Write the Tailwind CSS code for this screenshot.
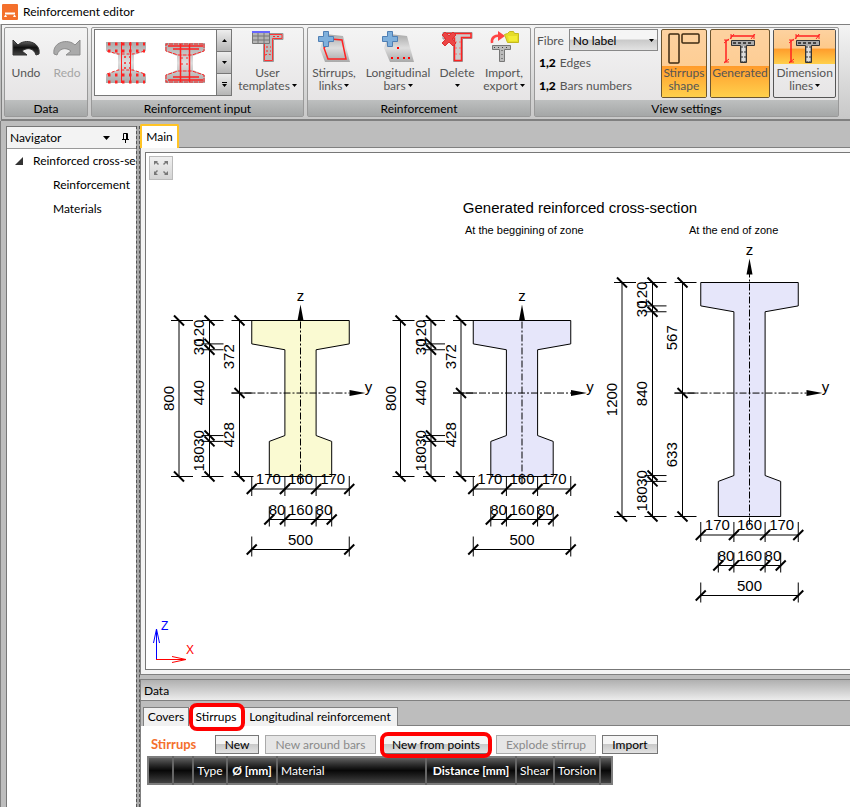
<!DOCTYPE html>
<html lang="en">
<head>
    <meta charset="UTF-8">
    <meta name="viewport" content="width=device-width, initial-scale=1.0">
    <title>Reinforcement editor</title>
    <script src="https://cdn.jsdelivr.net/npm/@tailwindcss/browser@4"></script>
</head>
<body class="h-screen flex flex-col overflow-hidden bg-[#bdbdbd] font-['Lato','Open_Sans',sans-serif] text-xs text-black">
    <!-- Icons shared by the ribbon -->
    <svg class="absolute w-0 h-0">
        <defs>
            <linearGradient id="steel" x1="0" y1="0" x2="0" y2="1">
                <stop offset="0" stop-color="#a9a9a9"/><stop offset=".5" stop-color="#dedede"/><stop offset="1" stop-color="#a9a9a9"/>
            </linearGradient>
            <linearGradient id="ink" x1="0" y1="0" x2="0" y2="1">
                <stop offset="0" stop-color="#777"/><stop offset=".5" stop-color="#111"/><stop offset="1" stop-color="#444"/>
            </linearGradient>
            <symbol id="plus" viewBox="0 0 16 16">
                <path d="M5.500 .500h5v5h5v5h-5v5h-5v-5h-5v-5h5z" fill="#7fb0dc" stroke="#4f7fb4"/>
            </symbol>
            <symbol id="beam-dim" viewBox="0 0 32 32">
                <path d="M7.500 8.500h23v5h-8v17h-6v-17h-9z" fill="#aaa" stroke="#333"/>
                <path d="M19.500 14v15" stroke="#ddd" stroke-width="3"/>
                <path d="M9 11h20" stroke="#444" stroke-width="2" stroke-dasharray="3 2"/>
                <path d="M18 14v16M21 14v16" stroke="#333" stroke-dasharray="2 3"/>
                <path d="M7 4h23M2 8v22" stroke="#f22" stroke-width="1.500"/>
                <path d="M6 7l4-5M27 7l4-5M0 11l5-4M0 31l5-4M7 2v5M30 2v5M0 8h5M0 30h5" stroke="#f22"/>
            </symbol>
        </defs>
    </svg>

    <!-- Title bar -->
    <header class="h-6 shrink-0 bg-white flex items-center gap-[5px] px-[2px]">
        <svg class="w-4 h-4" viewBox="0 0 16 16">
            <rect width="16" height="16" rx="1" fill="#f4702c"/>
            <path d="M3 9.500h10" stroke="#fff" stroke-width="2"/>
            <path d="M2 13l1-2h1l1 2zM14 13l-1-2h-1l-1 2z" fill="#fff"/>
        </svg>
        <h1>Reinforcement editor</h1>
    </header>

    <!-- Ribbon -->
    <div class="h-[97px] shrink-0 flex gap-[3px] pt-[2px] pb-[2px] pl-[2px] ml-[1px] border-l border-t border-b-2 border-[#808080] bg-linear-to-b from-[#f4f4f4] to-[#c8c8c8] leading-[13px] text-[#555]">
        <section class="w-[84px] shrink-0 flex flex-col border border-[#999] rounded-xs bg-linear-to-b from-[#f4f4f4] to-[#e3e1e2]">
            <div class="flex-1 flex">
                <button class="w-[42px] flex flex-col items-center pt-[3px]">
                    <svg class="w-8 h-8" viewBox="0 0 32 32">
                        <path d="M3 9v15h14l-5-4c5-4 12-3 14 4l3-1c2-12-14-16-21-9z" fill="url(#ink)" stroke="#333"/>
                    </svg>
                    <span class="pt-[3px]">Undo</span>
                </button>
                <button class="w-10 flex flex-col items-center pt-[3px] text-[#a5a5a5]" disabled>
                    <svg class="w-8 h-8" viewBox="0 0 32 32">
                        <path d="M29 9v15h-14l5-4c-5-4-12-3-14 4l-3-1c-2-12 14-16 21-9z" fill="#aaa" stroke="#8d8d8d"/>
                    </svg>
                    <span class="pt-[3px]">Redo</span>
                </button>
            </div>
            <h2 class="h-4 shrink-0 text-center leading-[17px] text-black bg-linear-to-b from-[#bdbfbf] to-[#a5a7a7]">Data</h2>
        </section>

        <section class="w-[213px] shrink-0 flex flex-col border border-[#999] rounded-xs bg-linear-to-b from-[#f4f4f4] to-[#e3e1e2]">
            <div class="flex-1 flex pl-[2px] pt-[1px]">
                <div class="w-[138px] h-[67px] flex border border-[#777] bg-white">
                    <div class="flex-1 flex items-center justify-center gap-[19px]">
                        <svg class="w-10 h-11" viewBox="0 0 40 44">
                            <path d="M0 1h40v9l-12 4v15l12 4v9H0v-9l12-4V14L0 10z" fill="url(#steel)"/>
                            <path d="M1 10l11 3h15l12-3M1 33l11-4h15l12 4" fill="none" stroke="#f22" stroke-dasharray="3 2"/>
                            <path d="M15.500 1v41M24.500 1v41" stroke="#f22"/>
                            <path d="M2 3h37M2 10h37M2 34h37M2 41h37" stroke="#f22" stroke-width="3" stroke-dasharray="2.500 4.500"/>
                            <path d="M18 16h6M18 22h6M18 27h6" stroke="#f22" stroke-width="1.500" stroke-dasharray="2 3"/>
                        </svg>
                        <svg class="w-10 h-11" viewBox="0 0 40 44">
                            <path d="M0 2h40v8l-12 5v14l12 5v8H0v-8l12-5V15L0 10z" fill="url(#steel)"/>
                            <path d="M1 10V3h38v7l-12 4h-14zM1 34v7h38v-7l-12-4h-14z" fill="none" stroke="#f22" stroke-dasharray="4 1"/>
                            <path d="M3 5h35M8 8h26M8 36h26M3 39h35" stroke="#f22" stroke-width="1.500"/>
                            <path d="M15.500 3v38M24.500 3v38" stroke="#f22" stroke-width="1.500"/>
                            <path d="M17 16v12M22 16v12" stroke="#f22" stroke-dasharray="2 4"/>
                        </svg>
                    </div>
                    <div class="w-[15px] flex flex-col border-l border-[#777] divide-y divide-[#777]">
                        <button class="flex-1 flex items-center justify-center bg-linear-to-b from-[#eee] to-[#b5b5b5]" aria-label="Previous">
                            <svg class="w-[5px] h-[3px]" viewBox="0 0 5 3"><path d="M0 3l2.500-3L5 3z"/></svg>
                        </button>
                        <button class="flex-1 flex items-center justify-center bg-linear-to-b from-[#eee] to-[#b5b5b5]" aria-label="Next">
                            <svg class="w-[5px] h-[3px]" viewBox="0 0 5 3"><path d="M0 0h5L2.500 3z"/></svg>
                        </button>
                        <button class="flex-1 flex items-center justify-center bg-linear-to-b from-[#eee] to-[#b5b5b5]" aria-label="More">
                            <svg class="w-[5px] h-[5px]" viewBox="0 0 5 5"><path d="M0 0h5v1H0zM0 2h5L2.500 5z"/></svg>
                        </button>
                    </div>
                </div>
                <button class="flex-1 flex flex-col items-center pt-[2px]">
                    <svg class="w-8 h-8" viewBox="0 0 32 32">
                        <path d="M0 2.500h31v6H21.500v22h-10V8H0z" fill="#bbb" stroke="#999"/>
                        <path d="M18 3.500h12v4H20.500v22h-8V13" fill="none" stroke="#f33"/>
                        <path d="M13 24l3-1 4 1M14 20h5M14 16h5M21 5.500h7" stroke="#f22" stroke-dasharray="2 2" fill="none"/>
                        <path d="M.500 1.500h17v11H.500zM.500 5h17M.500 9h17M6 1v11M12 1v11" fill="#b5b5b5" stroke="#777"/>
                        <path d="M0 1h18" stroke="#66f" stroke-width="2"/>
                    </svg>
                    <span class="pt-[3px]">User</span>
                    <span class="flex items-center gap-[2px]">templates <svg class="w-[5px] h-[3px]" viewBox="0 0 5 3"><path d="M0 0h5L2.500 3z" fill="#000"/></svg></span>
                </button>
            </div>
            <h2 class="h-4 shrink-0 text-center leading-[17px] text-black bg-linear-to-b from-[#bdbfbf] to-[#a5a7a7]">Reinforcement input</h2>
        </section>

        <section class="w-[224px] shrink-0 flex flex-col border border-[#999] rounded-xs bg-linear-to-b from-[#f4f4f4] to-[#e3e1e2]">
            <div class="flex-1 flex pt-[3px]">
                <button class="w-[52px] flex flex-col items-center">
                    <svg class="w-8 h-8" viewBox="0 0 32 32">
                        <path d="M7 3l18 2 7 26H7L2 18z" fill="url(#steel)"/>
                        <path d="M13 8l11 1 4 19H10L6 17z" fill="none" stroke="#f22" stroke-width="1.500"/>
                        <use href="#plus" x="0" y="0" width="16" height="16"/>
                    </svg>
                    <span class="pt-[3px]">Stirrups,</span>
                    <span class="flex items-center gap-[2px]">links <svg class="w-[5px] h-[3px]" viewBox="0 0 5 3"><path d="M0 0h5L2.500 3z"/></svg></span>
                </button>
                <button class="w-[76px] flex flex-col items-center">
                    <svg class="w-8 h-8" viewBox="0 0 32 32">
                        <path d="M7 3l18 2 7 26H8L2 17z" fill="url(#steel)"/>
                        <path d="M15 16h2v2h-2zM9 26h2v2H9zM15 26h2v2h-2zM21 26h2v2h-2zM26 26h2v2h-2z" fill="#f00"/>
                        <use href="#plus" x="0" y="0" width="16" height="16"/>
                    </svg>
                    <span class="pt-[3px]">Longitudinal</span>
                    <span class="flex items-center gap-[2px]">bars <svg class="w-[5px] h-[3px]" viewBox="0 0 5 3"><path d="M0 0h5L2.500 3z"/></svg></span>
                </button>
                <button class="w-[42px] flex flex-col items-center">
                    <svg class="w-8 h-8" viewBox="0 0 32 32">
                        <path d="M2 1.500h29v6H21.500v23h-9V8H2z" fill="#ccc" stroke="#999"/>
                        <path d="M3 2.500h27v4H20.500v23h-7V7H3" fill="none" stroke="#f22" stroke-width="1.500"/>
                        <path d="M15 10v18M19 10v18" stroke="#f66" stroke-dasharray="2 4"/>
                        <path d="M4 1l4 4 4-4 3 3-4 4 4 4-3 3-4-4-4 4-3-3 4-4-4-4z" fill="#ec4545" stroke="#d33"/>
                    </svg>
                    <span class="pt-[3px]">Delete</span>
                    <span class="h-[13px] flex items-center"><svg class="w-[5px] h-[3px]" viewBox="0 0 5 3"><path d="M0 0h5L2.500 3z"/></svg></span>
                </button>
                <button class="w-[52px] flex flex-col items-center">
                    <svg class="w-8 h-8" viewBox="0 0 32 32">
                        <path d="M4.500 14.500h18v4h-6v12h-5v-12h-7z" fill="#bbb" stroke="#777"/>
                        <path d="M6 16.500h15M14 19v11" stroke="#444" stroke-dasharray="1 3"/>
                        <path d="M4 12c-1-6 4-8 8-7" fill="none" stroke="#f44" stroke-width="2.500"/>
                        <path d="M10 0l7 5-7 5z" fill="#f44"/>
                        <path d="M16.500 3.500l3-1 2-2h4l1 2h4v9h-11z" fill="#e5dc28" stroke="#c4b91d"/>
                        <path d="M20 5h9v5h-8z" fill="#f3ec35"/>
                    </svg>
                    <span class="pt-[3px]">Import,</span>
                    <span class="flex items-center gap-[2px]">export <svg class="w-[5px] h-[3px]" viewBox="0 0 5 3"><path d="M0 0h5L2.500 3z"/></svg></span>
                </button>
            </div>
            <h2 class="h-4 shrink-0 text-center leading-[17px] text-black bg-linear-to-b from-[#bdbfbf] to-[#a5a7a7]">Reinforcement</h2>
        </section>

        <section class="w-[305px] shrink-0 flex flex-col border border-[#999] rounded-xs bg-linear-to-b from-[#f4f4f4] to-[#e3e1e2]">
            <div class="flex-1 flex gap-[3px] px-[2px] pt-px">
                <div class="w-[121px] shrink-0 flex flex-col">
                    <div class="flex items-center gap-[5px]">
                        <label for="fibre">Fibre</label>
                        <div class="relative flex-1">
                            <select id="fibre" class="w-full h-[22px] appearance-none border border-[#888] pl-[3px] text-black bg-linear-to-b from-[#f5f5f5] from-45% via-[#c9c9c9] via-50% to-[#e2e2e2]">
                                <option>No label</option>
                            </select>
                            <svg class="absolute right-1 top-[10px] w-[5px] h-[3px] pointer-events-none" viewBox="0 0 5 3"><path d="M0 0h5L2.500 3z"/></svg>
                        </div>
                    </div>
                    <button class="h-[23px] flex items-center gap-1 pl-[2px]"><b class="text-black font-black">1,2</b>Edges</button>
                    <button class="h-[22px] flex items-center gap-1 pl-[2px]"><b class="text-black font-black">1,2</b>Bars numbers</button>
                </div>
                <button class="w-[46px] h-[69px] flex flex-col items-center pt-[2px] border border-[#6b5530] rounded-xs bg-linear-to-b from-[#fdd2a0] to-[#fdc98a]">
                    <svg class="w-8 h-8" viewBox="0 0 32 32">
                        <rect x="1" y="2" width="10" height="29" rx="1" fill="none" stroke="#3d2a12" stroke-width="1.500"/>
                        <rect x="14" y="2" width="17" height="9" rx="1" fill="none" stroke="#3d2a12" stroke-width="1.500"/>
                    </svg>
                    <span class="mt-[2px] flex-1 w-full bg-linear-to-b from-[#ff9b2b] to-[#ffd04c]">Stirrups<br>shape</span>
                </button>
                <button class="w-[61px] h-[69px] flex flex-col items-center pt-[2px] border border-[#6b5530] rounded-xs bg-linear-to-b from-[#fdd2a0] to-[#fdc98a]">
                    <svg class="w-8 h-8"><use href="#beam-dim"/></svg>
                    <span class="mt-[2px] flex-1 w-full bg-linear-to-b from-[#ff9b2b] to-[#ffd04c]">Generated</span>
                </button>
                <button class="w-[63px] h-[69px] flex flex-col items-center border border-[#555] rounded-xs">
                    <span class="w-full h-[34px] pt-[2px] flex justify-center bg-[linear-gradient(#fdd2a0,#fdc98a_54%,#ff9b2b_55%,#ffd04c)]"><svg class="w-8 h-8"><use href="#beam-dim"/></svg></span>
                    <span class="pt-[2px]">Dimension</span>
                    <span class="flex items-center gap-[2px]">lines <svg class="w-[5px] h-[3px]" viewBox="0 0 5 3"><path d="M0 0h5L2.500 3z"/></svg></span>
                </button>
            </div>
            <h2 class="h-4 shrink-0 text-center leading-[17px] text-black bg-linear-to-b from-[#bdbfbf] to-[#a5a7a7]">View settings</h2>
        </section>
    </div>

    <!-- Docked panels -->
    <main class="flex-1 min-h-0 flex pl-[5px] border-l border-[#808080]">
        <nav class="w-[130px] shrink-0 mt-[5px] flex flex-col border-l border-t border-[#777] bg-white">
            <div class="h-[22px] shrink-0 flex items-center gap-4 pl-[3px] pr-[7px] border-b border-[#999] bg-[#f3f3f3]">
                <h2 class="flex-1">Navigator</h2>
                <div class="flex items-center gap-3">
                    <button aria-label="Panel menu"><svg class="w-[7px] h-1" viewBox="0 0 7 4"><path d="M0 0h7L3.500 4z"/></svg></button>
                    <button aria-label="Pin panel"><svg class="w-[7px] h-[10px]" viewBox="0 0 7 10"><path d="M1.500 6V.500h4V6M0 6.500h7M3.500 7v3" fill="none" stroke="#000"/><path d="M4 1h1v5H4z"/></svg></button>
                </div>
            </div>
            <ul class="leading-6 whitespace-nowrap overflow-hidden">
                <li class="flex items-center pl-[8px] gap-[10px]"><svg class="w-2 h-2 shrink-0" viewBox="0 0 8 8"><path d="M8 0v8H0z" fill="#333"/></svg><a href="#">Reinforced cross-section</a></li>
                <li class="pl-[46px]"><a href="#">Reinforcement</a></li>
                <li class="pl-[46px]"><a href="#">Materials</a></li>
            </ul>
        </nav>
        <div class="w-1 shrink-0 mt-[5px] border-x border-dashed border-[#555] bg-[#aaa]"></div>

        <div class="flex-1 min-w-0 flex flex-col">
            <!-- Drawing area -->
            <div class="shrink-0 pt-[3px] flex">
                <button class="h-6 w-[39px] border-2 border-b-0 border-[#ffc425] rounded-t-xs bg-white">Main</button>
                <div class="flex-1 border-b border-[#808080]"></div>
            </div>
            <div class="flex-1 min-h-0 flex border-l border-b border-[#808080] bg-[#f4f4f4] pl-1 pt-1 pb-1">
                <div class="relative flex-1 min-w-0 border border-r-0 border-[#777] bg-white overflow-hidden">
                    <svg id="drawing" class="block w-[704px] h-[516px] font-['Liberation_Sans',Arial,sans-serif]" viewBox="146 153 704 516"></svg>
                    <button class="absolute left-[3px] top-[3px] w-6 h-6 border border-[#bbb] bg-linear-to-b from-[#f0f0f0] to-[#d4d4d4]" aria-label="Zoom all">
                        <svg class="w-[22px] h-[22px]" viewBox="0 0 22 22">
                            <path d="M4 4h4L7 5l2 2-1 1-2-2-2 2zM18 4v4l-2-2-2 2-1-1 2-2-1-1zM4 18v-4l1 1 2-2 1 1-2 2 2 2zM18 18h-4l1-1-2-2 1-1 2 2 2-2z" fill="#777"/>
                        </svg>
                    </button>
                </div>
            </div>

            <!-- Data panel -->
            <div class="h-1 shrink-0"></div>
            <section class="h-32 shrink-0 flex flex-col">
                <h2 class="h-[22px] shrink-0 pl-[3px] leading-[22px] border border-r-0 border-[#808080] bg-linear-to-b from-[#b0b0b0] to-[#ececec]">Data</h2>
                <div class="h-[25px] shrink-0 flex items-end pl-[2px] border-l border-[#808080]">
                    <button class="w-[46px] h-[19px] border border-b-0 border-[#808080] bg-[#f1f1f1]">Covers</button>
                    <button class="relative w-[54px] h-[19px] bg-white">
                        Stirrups
                        <span class="absolute left-0 -top-1 w-14 h-7 border-4 border-[#f00] rounded-lg"></span>
                    </button>
                    <button class="w-[155px] h-[19px] border border-b-0 border-l-0 border-[#808080] bg-[#f1f1f1]">Longitudinal reinforcement</button>
                    <div class="flex-1 self-stretch border-b border-[#808080]"></div>
                </div>
                <div class="flex-1 pt-[9px] pl-[6px] border-l border-[#808080] bg-white">
                    <div class="flex items-center gap-[6px] pl-1">
                        <h3 class="w-[58px] text-[13px] font-bold leading-[19px] text-[#f4702c]">Stirrups</h3>
                        <button class="w-11 h-[19px] leading-[17px] border border-[#777] bg-linear-to-b from-[#f5f5f5] from-45% via-[#c9c9c9] via-50% to-[#e2e2e2]">New</button>
                        <button class="w-[111px] h-[19px] leading-[17px] border border-[#aaa] text-[#8a8a8a] bg-[#e6e6e6]" disabled>New around bars</button>
                        <button class="relative w-[108px] h-[19px] leading-[17px] border border-[#777] bg-linear-to-b from-[#f5f5f5] from-45% via-[#c9c9c9] via-50% to-[#e2e2e2]">
                            New from points
                            <span class="absolute -left-[3px] -top-1 w-28 h-[26px] border-4 border-[#f00] rounded-lg"></span>
                        </button>
                        <button class="w-[100px] h-[19px] leading-[17px] border border-[#aaa] text-[#8a8a8a] bg-[#e6e6e6]" disabled>Explode stirrup</button>
                        <button class="w-14 h-[19px] leading-[17px] border border-[#777] bg-linear-to-b from-[#f5f5f5] from-45% via-[#c9c9c9] via-50% to-[#e2e2e2]">Import</button>
                    </div>
                    <table class="mt-[2px] w-[466px] table-fixed border-collapse border-2 border-[#7d7d7d] text-white whitespace-nowrap">
                        <thead>
                            <tr class="h-[27px] bg-linear-to-b from-[#686868] from-0% via-[#080808] via-50% to-[#484848]">
                                <th class="w-[25px] border-r-2 border-[#666]"></th>
                                <th class="w-[20px] border-r-2 border-[#666]"></th>
                                <th class="w-[34px] border-r-2 border-[#666] font-normal">Type</th>
                                <th class="w-[50px] border-r-2 border-[#666] font-bold">Ø [mm]</th>
                                <th class="w-[149px] border-r-2 border-[#666] font-normal text-left pl-[3px]">Material</th>
                                <th class="w-[90px] border-r-2 border-[#666] font-bold">Distance [mm]</th>
                                <th class="w-[38px] border-r-2 border-[#666] font-normal">Shear</th>
                                <th class="w-[46px] border-r-2 border-[#666] font-normal">Torsion</th>
                                <th></th>
                            </tr>
                        </thead>
                    </table>
                </div>
            </section>
        </div>
    </main>

    <script>
        const SCALE = 0.195; // px per mm

        // cx: section axis, top: upper edge, gap: extra distance of dimension lines
        const sections = [
            { cx: 300.5, top: 320.5, web: 440, upper: 372, lower: 428, gap: 0, over: 0, fill: '#fafad2' },
            { cx: 522, top: 320.5, web: 440, upper: 372, lower: 428, gap: 0, over: 0, fill: '#e6e6fa' },
            { cx: 749.5, top: 282.5, web: 840, upper: 567, lower: 633, gap: 6, over: 8, fill: '#e6e6fa' }
        ];

        const line = (x1, y1, x2, y2, extra = '') => `<path d="M${x1} ${y1}L${x2} ${y2}" stroke="#000" ${extra}/>`;
        const label = (x, y, text, extra = '') => `<text x="${x}" y="${y}" font-size="15" text-anchor="middle" ${extra}>${text}</text>`;

        // Vertical dimension chain
        function chainV(x, top, parts) {
            let y = top;
            const tick = at => line(x - 8, at, x + 14, at) + line(x - 5, at - 5, x + 5, at + 5, 'stroke-width="2"');
            let out = tick(y);
            parts.forEach(mm => {
                const next = y + mm * SCALE;
                const mid = (y + next) / 2;
                out += line(x, y, x, next) + tick(next) + label(x - 5, mid, mm, `transform="rotate(-90 ${x - 5} ${mid})"`);
                y = next;
            });
            return out;
        }

        // Horizontal dimension chain
        function chainH(y, left, parts) {
            let x = left;
            const tick = at => line(at, y - 13, at, y + 7) + line(at - 5, y + 5, at + 5, y - 5, 'stroke-width="2"');
            let out = tick(x);
            parts.forEach(mm => {
                const next = x + mm * SCALE;
                out += line(x, y, next, y) + tick(next) + label((x + next) / 2, y - 5, mm);
                x = next;
            });
            return out;
        }

        function drawSection(s) {
            const bottom = s.top + (360 + s.web) * SCALE;
            const axis = s.top + s.upper * SCALE;
            const half = 250 * SCALE, web = 80 * SCALE, foot = 160 * SCALE;
            const y1 = s.top + 120 * SCALE, y2 = s.top + 150 * SCALE;
            const y3 = bottom - 210 * SCALE, y4 = bottom - 180 * SCALE;
            const tip = s.top - 16 - s.over;
            const right = s.cx + 49 + s.over;
            const c = s.cx;
            return `
                <path d="M${c - half} ${s.top}H${c + half}V${y1}L${c + web} ${y2}V${y3}L${c + foot} ${y4}V${bottom}H${c - foot}V${y4}L${c - web} ${y3}V${y2}L${c - half} ${y1}Z" fill="${s.fill}" stroke="#000"/>
                ${line(c, bottom + 8, c, tip + 15, 'stroke-dasharray="7 2 2 2"')}
                ${line(c - 69 - s.gap, axis, right, axis, 'stroke-dasharray="7 2 2 2"')}
                <path d="M${c} ${tip}l3 16h-6zM${right + 16} ${axis}l-16 3v-6z"/>
                ${label(c, tip - 4, 'z')}
                ${label(right + 19, axis - 1, 'y')}
                ${chainV(c - 121.5 - s.gap, s.top, [360 + s.web])}
                ${chainV(c - 91 - s.gap, s.top, [120, 30, s.web, 30, 180])}
                ${chainV(c - 61 - s.gap, s.top, [s.upper, s.lower])}
                ${chainH(bottom + 12.5 + s.gap, c - half, [170, 160, 170])}
                ${chainH(bottom + 43 + s.gap, c - foot, [80, 160, 80])}
                ${chainH(bottom + 73 + s.gap, c - half, [500])}`;
        }

        document.getElementById('drawing').innerHTML = `
            ${label(580, 213, 'Generated reinforced cross-section')}
            <text x="465" y="234" font-size="11">At the beggining of zone</text>
            <text x="689" y="234" font-size="11">At the end of zone</text>
            ${sections.map(drawSection).join('')}
            <path d="M156.500 659V629M153.500 643l3-14 3 14" fill="none" stroke="#00f"/>
            <path d="M156 659.500h30M172 656.500l14 3-14 3" fill="none" stroke="#f00"/>
            <text x="161" y="630" font-size="12" fill="#00f">Z</text>
            <text x="186" y="654" font-size="12" fill="#f00">X</text>`;
    </script>
</body>
</html>
